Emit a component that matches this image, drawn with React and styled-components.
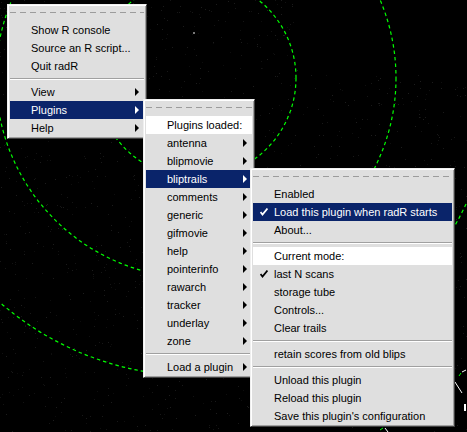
import React from 'react';
import styled, { createGlobalStyle } from "styled-components";

const GlobalStyle = createGlobalStyle`
  html, body {
    margin: 0;
    padding: 0;
    background: #000;
    overflow: hidden;
  }
`;

const Screen = styled.div`
  position: relative;
  width: 467px;
  height: 432px;
  background: #000;
  overflow: hidden;
  font-family: "Liberation Sans", Arial, sans-serif;
  font-size: 11px;
`;

const Radar = styled.svg`
  position: absolute;
  left: 0;
  top: 0;
`;

const Menu = styled.div`
  position: absolute;
  left: ${p => p.$x}px;
  top: ${p => p.$y}px;
  width: ${p => p.$w}px;
  box-sizing: border-box;
  display: flex;
  flex-direction: column;
  background: #dfdfdf;
  border: 1px solid;
  border-color: #efefef #404040 #404040 #efefef;
  box-shadow: inset 1px 1px #ffffff, inset -1px -1px #a0a0a0;
  padding: 1px 2px 1px 2px;
`;

const Tearoff = styled.div`
  height: 15px;
  display: flex;
  align-items: flex-start;
  padding-top: 6px;
  box-sizing: border-box;

  &::before {
    content: "";
    flex: 1;
    height: 1px;
    background: repeating-linear-gradient(90deg, #9c9c9c 0 6px, transparent 6px 10px);
  }
`;

const Item = styled.div`
  height: 18px;
  display: flex;
  align-items: center;
  color: ${p => (p.$active ? "#fff" : "#000")};
  background: ${p => (p.$active ? "#0a246a" : p.$label ? "#fff" : "transparent")};
  white-space: nowrap;
`;

const Indicator = styled.span`
  width: 20px;
  display: flex;
  align-items: center;
  justify-content: center;
  padding-left: 1px;
`;

const Caption = styled.span`
  flex: 1;
  line-height: 18px;
`;

const Arrow = styled.span`
  width: 0;
  height: 0;
  margin-right: 5px;
  border-top: 4px solid transparent;
  border-bottom: 4px solid transparent;
  border-left: 4px solid ${p => (p.$active ? "#fff" : "#000")};
`;

const Separator = styled.div`
  height: 8px;
  display: flex;
  flex-direction: column;
  justify-content: center;

  &::before {
    content: "";
    height: 1px;
    background: #a0a0a0;
  }
  &::after {
    content: "";
    height: 1px;
    background: #fff;
  }
`;

function Check({ color }) {
  return (
    <svg width="8" height="8" viewBox="0 0 8 8">
      <path d="M0.5 4 L2.5 6.5 L7.5 0.5" fill="none" stroke={color} strokeWidth="1.8" />
    </svg>
  );
}

function MenuList({ items }) {
  return items.map((it, i) => {
    if (it === "-") return <Separator key={i} />;
    if (it === "~") return <Tearoff key={i} />;
    return (
      <Item key={i} $active={it.active} $label={it.label}>
        <Indicator>{it.check && <Check color={it.active ? "#fff" : "#000"} />}</Indicator>
        <Caption>{it.text}</Caption>
        {it.sub && <Arrow $active={it.active} />}
      </Item>
    );
  });
}

const mainMenu = [
  "~",
  { text: "Show R console" },
  { text: "Source an R script..." },
  { text: "Quit radR" },
  "-",
  { text: "View", sub: true },
  { text: "Plugins", sub: true, active: true },
  { text: "Help", sub: true },
];

const pluginMenu = [
  "~",
  { text: "Plugins loaded:", label: true },
  { text: "antenna", sub: true },
  { text: "blipmovie", sub: true },
  { text: "bliptrails", sub: true, active: true },
  { text: "comments", sub: true },
  { text: "generic", sub: true },
  { text: "gifmovie", sub: true },
  { text: "help", sub: true },
  { text: "pointerinfo", sub: true },
  { text: "rawarch", sub: true },
  { text: "tracker", sub: true },
  { text: "underlay", sub: true },
  { text: "zone", sub: true },
  "-",
  { text: "Load a plugin", sub: true },
];

const trailsMenu = [
  "~",
  { text: "Enabled" },
  { text: "Load this plugin when radR starts", check: true, active: true },
  { text: "About..." },
  "-",
  { text: "Current mode:", label: true },
  { text: "last N scans", check: true },
  { text: "storage tube" },
  { text: "Controls..." },
  { text: "Clear trails" },
  "-",
  { text: "retain scores from old blips" },
  "-",
  { text: "Unload this plugin" },
  { text: "Reload this plugin" },
  { text: "Save this plugin's configuration" },
];

// faint clutter speckle on the radar image
function speckle() {
  let seed = 7;
  const rnd = () => {
    seed = (seed * 16807) % 2147483647;
    return seed / 2147483647;
  };
  const dots = [];
  for (let i = 0; i < 1600; i++) {
    const x = Math.floor(rnd() * 467);
    const y = Math.floor(rnd() * 432);
    if (y < 75 && x > 300) continue;
    const g = 12 + Math.floor(rnd() * 18);
    dots.push(<rect key={i} x={x} y={y} width="1" height="1" fill={`rgb(${g},${g},${g})`} />);
  }
  return dots;
}

function RadarView() {
  const cx = 196;
  const cy = 78;
  return (
    <Radar width="467" height="432" viewBox="0 0 467 432">
      {speckle()}
      {[100, 200, 298].map(r => (
        <circle key={r} cx={cx} cy={cy} r={r} fill="none" stroke="#00ff00" strokeWidth="1.2" strokeDasharray="3.5 3" />
      ))}
      <rect x="193" y="32" width="2" height="2" fill="#777" />
      <line x1="455" y1="382" x2="462" y2="393" stroke="#fff" strokeWidth="1" />
      <line x1="459" y1="376" x2="461" y2="373" stroke="#00ff00" strokeWidth="1" />
      <line x1="462" y1="372" x2="466" y2="370" stroke="#fff" strokeWidth="1" />
      <rect x="464" y="404" width="2" height="7" fill="#fff" />
      <line x1="385" y1="428" x2="388" y2="432" stroke="#fff" strokeWidth="1" />
      <line x1="380" y1="430" x2="383" y2="428" stroke="#00ff00" strokeWidth="1" />
    </Radar>
  );
}

function App() {
  return (
    <Screen>
      <GlobalStyle />
      <RadarView />
      <Menu $x={7} $y={4} $w={140}>
        <MenuList items={mainMenu} />
      </Menu>
      <Menu $x={143} $y={99} $w={112}>
        <MenuList items={pluginMenu} />
      </Menu>
      <Menu $x={250} $y={168} $w={205}>
        <MenuList items={trailsMenu} />
      </Menu>
    </Screen>
  );
}

export default App;
